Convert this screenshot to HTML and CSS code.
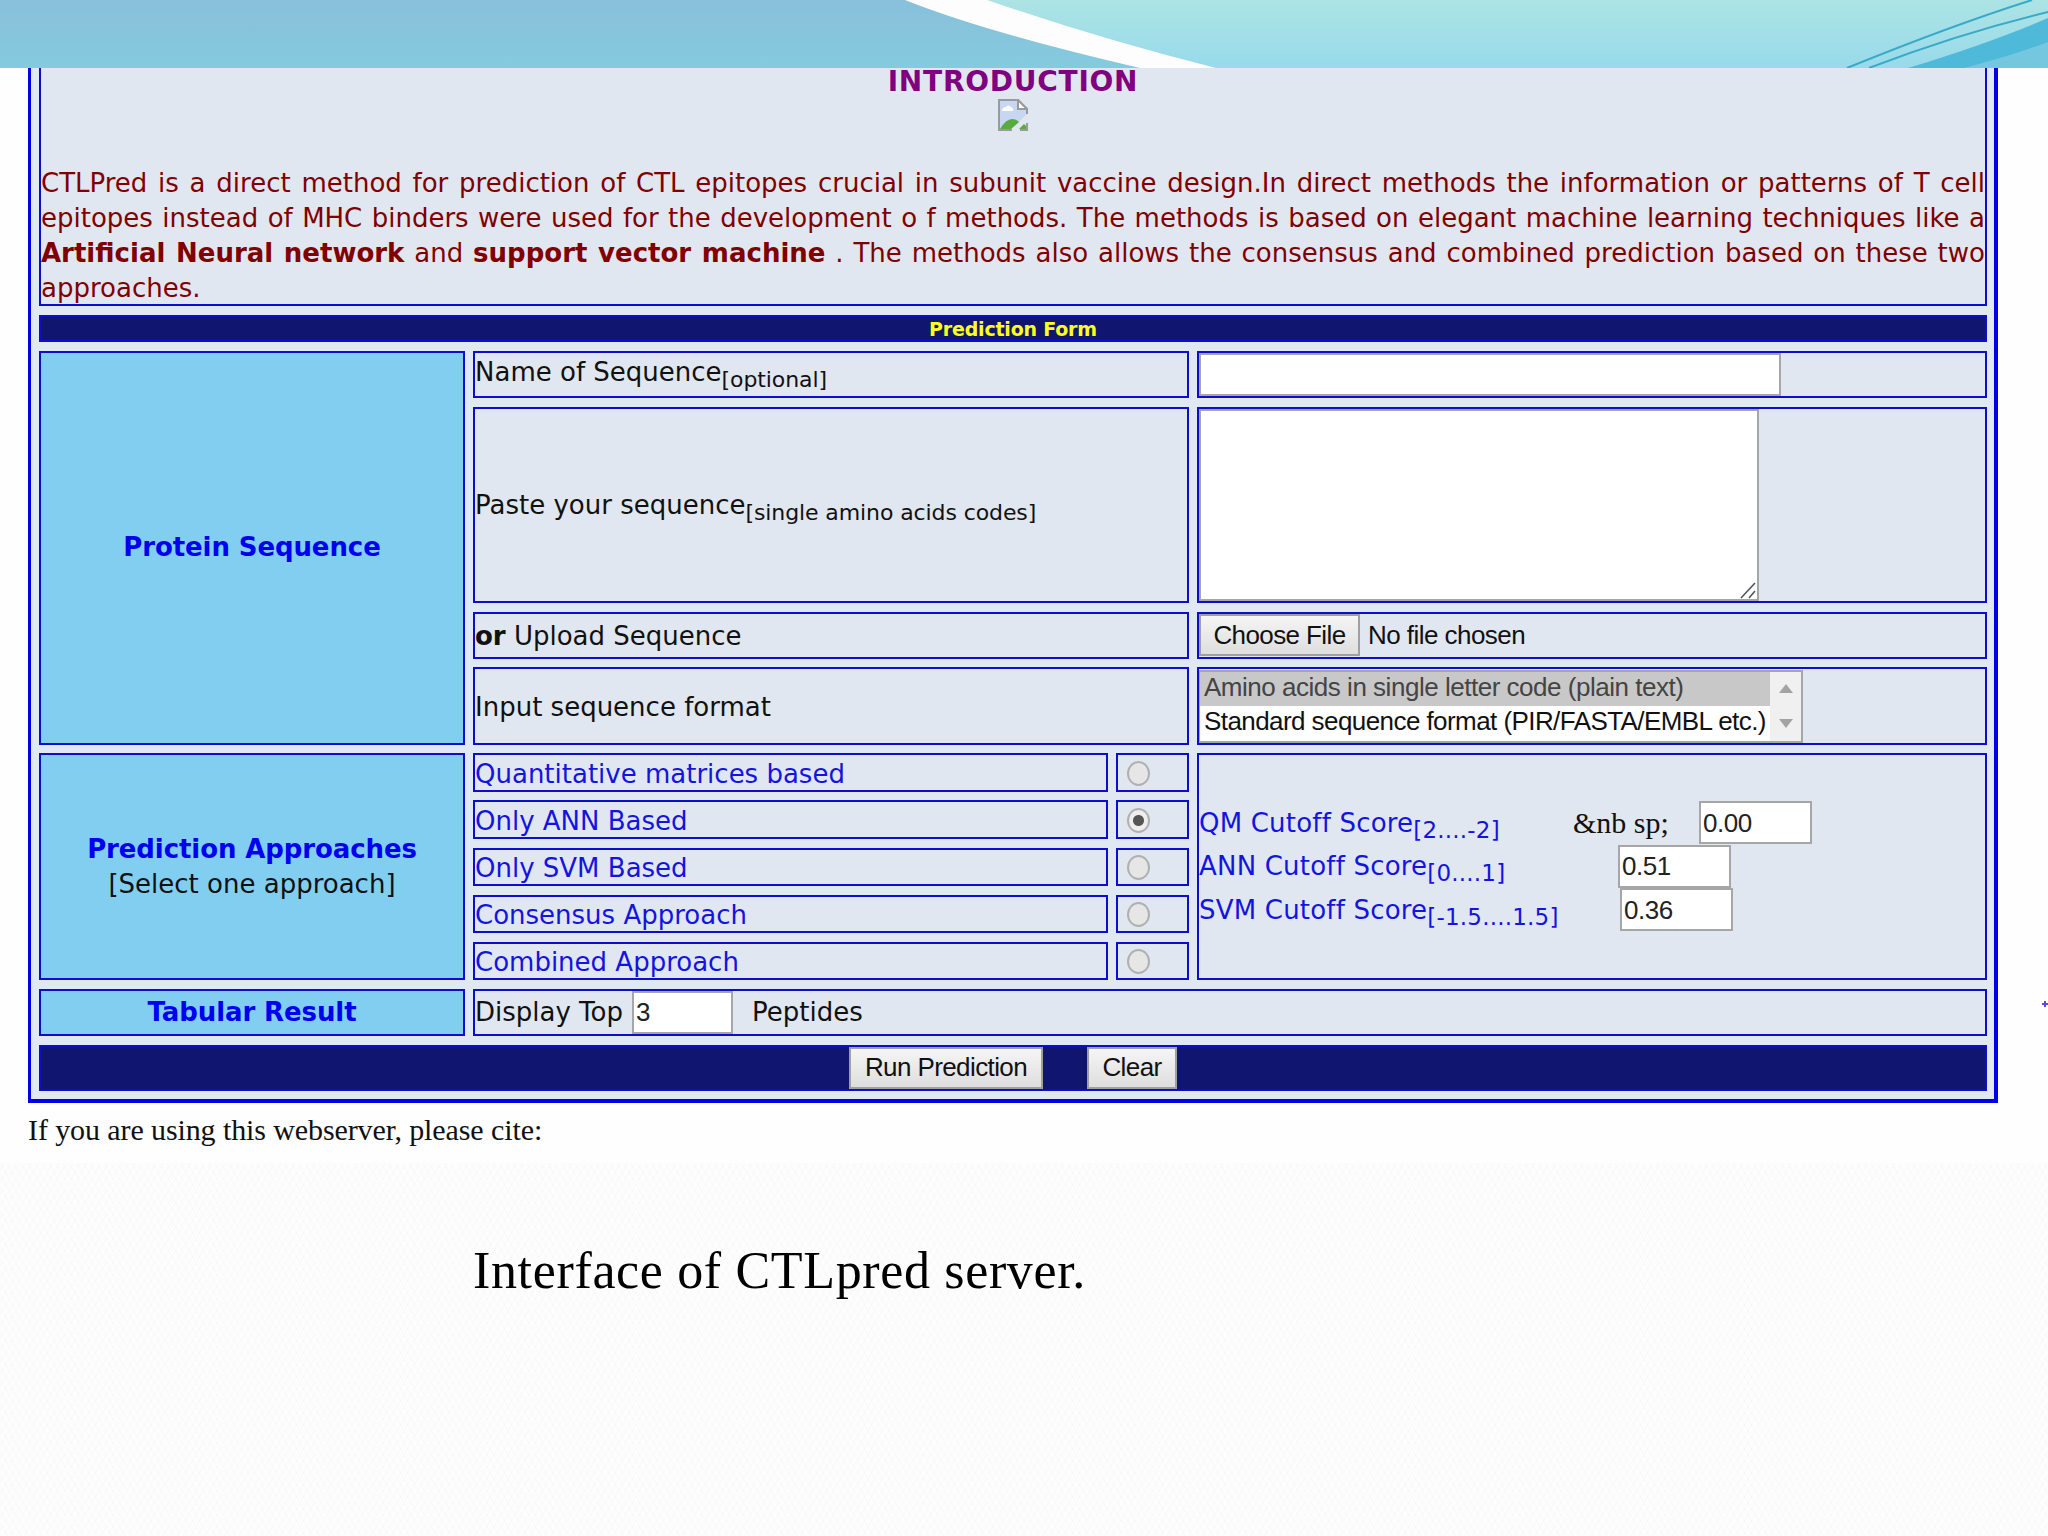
FILE: index.html
```html
<!DOCTYPE html>
<html lang="en">

<head>
  <meta charset="UTF-8" />
  <title>CTLPred</title>
  <link rel="stylesheet" href="styles.css">
</head>

<body>
  <header class="banner">
    <svg class="waves" viewBox="0 0 2048 68" preserveAspectRatio="none">
      <defs>
        <linearGradient id="left" x1="0" y1="0" x2="0" y2="1">
          <stop offset="0" stop-color="#89bfda" />
          <stop offset="1" stop-color="#84cbde" />
        </linearGradient>
        <linearGradient id="right" x1="0" y1="0" x2="0" y2="1">
          <stop offset="0" stop-color="#ace4e4" />
          <stop offset="1" stop-color="#98daeb" />
        </linearGradient>
      </defs>
      <rect width="2048" height="68" fill="#fdfdfe" />
      <path d="M0 0H905Q985 32 1140 68H0Z" fill="url(#left)" />
      <path d="M987 0H2048V68H1216Q1100 39 987 0Z" fill="url(#right)" />
      <path d="M2048 18Q1990 43 1908 68H2048Z" fill="#4fb9d9" />
      <path d="M2048 42Q2010 56 1964 68H2048Z" fill="#74c7df" />
      <path d="M1847 68Q1950 26 2032 0M1869 68Q1960 33 2048 12" fill="none" stroke="#3aa9c8" stroke-width="2" />
    </svg>
  </header>

  <main class="page">
    <form class="ctl-form">
      <section class="cell intro">
        <h1>INTRODUCTION</h1>
        <svg class="broken" viewBox="0 0 30 32">
          <path d="M1 1H20L29 10V15L12 31H1Z" fill="#c6d6f3" />
          <path d="M29 15V10L20 1H1V31H14M22 31H29V24" fill="none" stroke="#9a9a9a" stroke-width="2" />
          <path d="M20 1V10H29Z" fill="#fff" stroke="#9a9a9a" stroke-width="2" />
          <path d="M4 12Q4 8 8 8Q10 5 13 8Q16 9 15 12Z" fill="#fff" />
          <path d="M2 30Q8 20 14 20Q18 20 21 23L13 30Z" fill="#58ab3c" />
          <path d="M21 30L26 25L28 27V30Z" fill="#58ab3c" />
        </svg>
        <div class="text">
          <p>CTLPred is a direct method for prediction of CTL epitopes crucial in subunit vaccine design.In direct methods the information or patterns of T cell</p>
          <p>epitopes instead of MHC binders were used for the development o f methods. The methods is based on elegant machine learning techniques like a</p>
          <p><b>Artificial Neural network</b> and <b>support vector machine</b> . The methods also allows the consensus and combined prediction based on these two</p>
          <p class="last">approaches.</p>
        </div>
      </section>

      <div class="cell bar title">Prediction Form</div>

      <div class="cell side protein"><b>Protein Sequence</b></div>
      <div class="cell wide first"><label>Name of Sequence<sub>[optional]</sub></label></div>
      <div class="cell value"><input class="field name" type="text"></div>
      <div class="cell wide"><label>Paste your sequence<sub>[single amino acids codes]</sub></label></div>
      <div class="cell value">
        <div class="area">
          <svg viewBox="0 0 18 18"><path d="M2 17L16 2M10 17L16 10" stroke="#555" stroke-width="1.6" /></svg>
        </div>
      </div>
      <div class="cell wide upload"><label><b>or</b> Upload Sequence</label></div>
      <div class="cell value"><button class="btn choose" type="button">Choose File</button><span class="nofile">No file chosen</span></div>
      <div class="cell wide format"><label>Input sequence format</label></div>
      <div class="cell value">
        <div class="list">
          <div class="options">
            <div class="option selected">Amino acids in single letter code (plain text)</div>
            <div class="option second">Standard sequence format (PIR/FASTA/EMBL etc.)</div>
          </div>
          <div class="scroll"><i class="up"></i><i class="down"></i></div>
        </div>
      </div>

      <div class="cell side approaches"><b>Prediction Approaches</b><span>[Select one approach]</span></div>
      <div class="cell blue">Quantitative matrices based</div>
      <div class="cell pick"><i class="radio"></i></div>
      <div class="cell scores">
        <div class="score"><span>QM Cutoff Score<sub>[2....-2]</sub></span><span class="nbsp">&amp;nb sp;</span><input class="field" value="0.00"></div>
        <div class="score ann"><span>ANN Cutoff Score<sub>[0....1]</sub></span><input class="field" value="0.51"></div>
        <div class="score svm"><span>SVM Cutoff Score<sub>[-1.5....1.5]</sub></span><input class="field" value="0.36"></div>
      </div>
      <div class="cell blue">Only ANN Based</div>
      <div class="cell pick"><i class="radio on"></i></div>
      <div class="cell blue">Only SVM Based</div>
      <div class="cell pick"><i class="radio"></i></div>
      <div class="cell blue">Consensus Approach</div>
      <div class="cell pick"><i class="radio"></i></div>
      <div class="cell blue">Combined Approach</div>
      <div class="cell pick"><i class="radio"></i></div>

      <div class="cell side"><b>Tabular Result</b></div>
      <div class="cell tabular"><span>Display Top</span><input class="field top" value="3"><span>Peptides</span></div>

      <div class="cell bar actions">
        <button class="btn run" type="button">Run Prediction</button>
        <button class="btn clear" type="button">Clear</button>
      </div>
    </form>
    <p class="cite">If you are using this webserver, please cite:</p>
    <svg class="mark" viewBox="0 0 6 6"><path d="M0 3H6M3 0V6" stroke="#5a4ae0" stroke-width="2" /></svg>
  </main>

  <p class="caption">Interface of CTLpred server.</p>
</body>

</html>
```
FILE: styles.css
```css
* {
  margin: 0;
  padding: 0;
  box-sizing: border-box;
}

body {
  width: 2048px;
  height: 1536px;
  overflow: hidden;
  background-color: #fefdfe;
  /* faint woven texture */
  background-image:
    repeating-linear-gradient(60deg, rgba(110, 70, 110, 0.022) 0 1px, transparent 1px 6px),
    repeating-linear-gradient(-60deg, rgba(110, 70, 110, 0.022) 0 1px, transparent 1px 6px);
  font-family: "DejaVu Sans", Verdana, sans-serif;
  font-size: 26px;
  color: #111;
}

.banner {
  height: 68px;
}

.waves {
  display: block;
  width: 2048px;
  height: 68px;
}

.page {
  position: relative;
  height: 1095px;
  padding: 0 50px 0 28px;
  background: #fefefe;
}

/* the main table */
.ctl-form {
  display: grid;
  width: 1970px;
  height: 1035px;
  padding: 0 8px 8px;
  border: 3px solid #0000e8;
  border-width: 0 4px 4px 3px;
  background: #e0e8f1;
  grid-template-columns: 426px 635px 73px 790px;
  grid-template-rows: 238.2px 27.6px 47px 196.6px 47px 77.4px repeat(5, 38.5px) 47.2px 46.6px;
  column-gap: 8px;
  row-gap: 8.6px;
}

.cell {
  display: flex;
  align-items: center;
  min-width: 0;
  min-height: 0;
  border: 2px solid #0d0dd0;
  background: #e0e7f0;
  white-space: nowrap;
}

.wide {
  grid-column: 2 / 4;
}

.first {
  padding-bottom: 4px;
}

.upload,
.format,
.blue {
  padding-top: 2px;
}

.value {
  grid-column: 4;
}

sub {
  font-size: 22px;
  line-height: 0;
}

.wide sub {
  letter-spacing: -0.1px;
}

.intro {
  grid-column: 1 / -1;
  flex-direction: column;
  border-top: 0;
  color: #800000;
}

h1 {
  font-size: 28px;
  line-height: 28px;
  letter-spacing: 0.75px;
  color: #800080;
}

.broken {
  flex-shrink: 0;
  width: 30px;
  height: 32px;
  margin-top: 3px;
}

.text {
  flex-shrink: 0;
  width: 100%;
  margin-top: 35px;
}

.text p {
  height: 35px;
  line-height: 35px;
  text-align: justify;
  text-align-last: justify;
}

.text .last {
  text-align-last: left;
}

.bar {
  grid-column: 1 / -1;
  justify-content: center;
  background: #10166f;
}

.title {
  color: #ffff20;
  font-size: 19px;
  font-weight: bold;
  letter-spacing: -0.2px;
}

.side {
  grid-column: 1;
  flex-direction: column;
  justify-content: center;
  line-height: 35px;
  background: #82cef1;
}

.side b {
  color: #0000f0;
  letter-spacing: -0.1px;
}

.protein {
  grid-row: 3 / 7;
}

.approaches {
  grid-row: 7 / 12;
}

.blue {
  grid-column: 2;
  color: #1414e0;
}

.pick {
  grid-column: 3;
  padding-top: 1px;
  padding-left: 9px;
}

.radio {
  width: 23px;
  height: 25px;
  border: 2px solid #b0b0b0;
  border-radius: 50%;
  background: #e6e6e6;
}

.radio.on {
  background: radial-gradient(circle, #555 0 5px, #eee 6px);
}

.field {
  width: 113px;
  height: 43px;
  padding: 1px 0 0 2px;
  border: 2px solid #a6a6a6;
  background: #fff;
  font-family: "Liberation Sans", Arial, sans-serif;
  font-size: 26px;
  letter-spacing: -0.5px;
  color: #222;
}

.field.name {
  width: 582px;
}

.area {
  display: flex;
  justify-content: flex-end;
  align-items: flex-end;
  width: 560px;
  height: 192px;
  border: 2px solid #a6a6a6;
  background: #fff;
}

.area svg {
  width: 18px;
  height: 18px;
}

.btn {
  height: 42px;
  border: 2px solid #a0a0a0;
  background: linear-gradient(#f5f5f5, #dedede);
  font-family: "Liberation Sans", Arial, sans-serif;
  font-size: 26px;
  letter-spacing: -0.6px;
  color: #111;
}

.choose {
  width: 161px;
}

.nofile {
  margin-left: 8px;
  font-family: "Liberation Sans", Arial, sans-serif;
  font-size: 26px;
  letter-spacing: -0.55px;
}

.list {
  display: flex;
  width: 604px;
  height: 73px;
  border: 2px solid #a6a6a6;
  border-left-width: 1px;
  background: #fff;
  font-family: "Liberation Sans", Arial, sans-serif;
  font-size: 26px;
  letter-spacing: -0.48px;
}

.options {
  width: 570px;
}

.option {
  height: 34px;
  padding-left: 4px;
  line-height: 31px;
}

.option.selected {
  background: #c8c8c8;
  color: #444;
}

.option.second {
  letter-spacing: -0.57px;
}

.scroll {
  display: flex;
  flex: 1;
  flex-direction: column;
  align-items: center;
  justify-content: space-around;
  background: #f0f0f0;
}

.up,
.down {
  border: 7px solid transparent;
  border-bottom: 9px solid #a3a3a3;
  border-top: 0;
}

.down {
  border-top: 9px solid #a3a3a3;
  border-bottom: 0;
}

.scores {
  grid-column: 4;
  grid-row: 7 / 12;
  flex-direction: column;
  align-items: flex-start;
  justify-content: center;
  padding-bottom: 1px;
  color: #1414e0;
}

.score {
  display: flex;
  align-items: center;
  height: 43.4px;
}

.score > span:first-child {
  width: 374px;
  letter-spacing: 0.2px;
}

.score sub {
  font-size: 23px;
}

.score .nbsp {
  width: 126px;
  font-family: "Liberation Serif", "Times New Roman", serif;
  font-size: 30px;
  color: #111;
}

.score.ann .field {
  margin-left: 45px;
}

.score.svm .field {
  margin-left: 47px;
}

.tabular {
  grid-column: 2 / -1;
}

.top {
  width: 101px;
  margin: 0 19px 0 9px;
}

.run {
  width: 194px;
}

.clear {
  width: 90px;
  margin-left: 44px;
}

.cite {
  padding-top: 10px;
  font-family: "Liberation Serif", "Times New Roman", serif;
  font-size: 30px;
  line-height: 34px;
  letter-spacing: -0.1px;
}

.mark {
  position: absolute;
  top: 933px;
  right: 0;
  width: 6px;
  height: 6px;
}

.caption {
  padding: 78px 0 0 473px;
  font-family: "Liberation Serif", Constantia, serif;
  font-size: 52px;
  line-height: 60px;
  letter-spacing: 0.65px;
  color: #000;
}
```
